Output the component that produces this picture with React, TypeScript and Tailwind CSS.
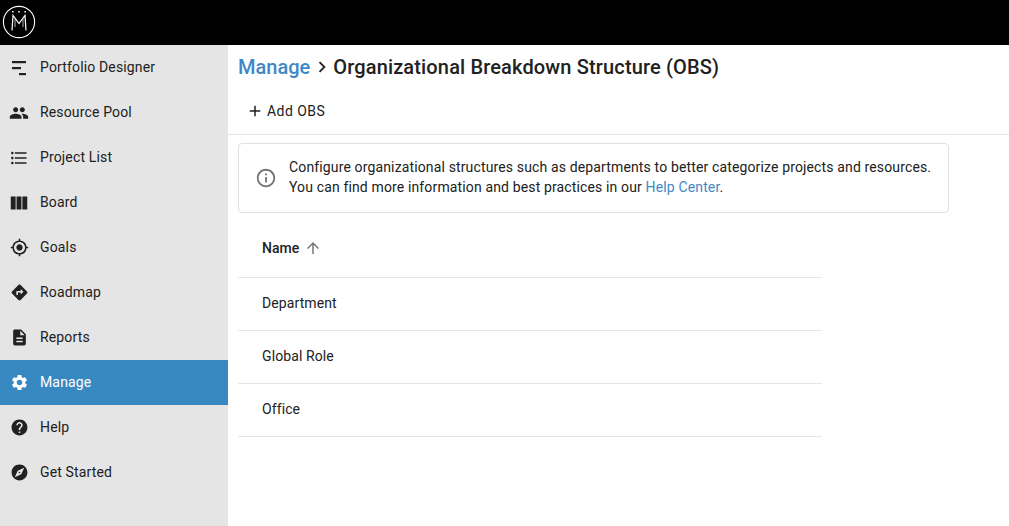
import React from 'react';
import {
  MdPeople,
  MdFormatListBulleted,
  MdViewColumn,
  MdGpsFixed,
  MdDirections,
  MdDescription,
  MdSettings,
  MdHelp,
  MdExplore,
  MdAdd,
  MdInfoOutline,
  MdArrowUpward,
  MdChevronRight,
} from 'react-icons/md';

const DesignerIcon = () => (
  <svg viewBox="0 0 24 24" className="w-[24px] h-[24px]" fill="currentColor">
    <rect x="5" y="5" width="14" height="2.2" />
    <rect x="5" y="11" width="9" height="2.2" />
    <rect x="12" y="17" width="7" height="2.2" />
  </svg>
);

const Logo = () => (
  <svg viewBox="0 0 34 34" className="w-[34px] h-[34px] text-white" fill="none" stroke="currentColor">
    <circle cx="17" cy="17" r="15.6" strokeWidth="1.1" />
    <path d="M10 25.5 L11 10.5 L17 18.5 L23 10.5 L24 25.5" strokeWidth="1.2" />
    <path d="M13 22 L13 14 M21 22 L21 14" strokeWidth="0.7" />
    <path d="M10.8 6 v1.6 M17 6 v1.6 M23.2 6 v1.6" strokeWidth="1.5" />
  </svg>
);

const navItems = [
  { label: 'Portfolio Designer', icon: <DesignerIcon /> },
  { label: 'Resource Pool', icon: <MdPeople size={20} /> },
  { label: 'Project List', icon: <MdFormatListBulleted size={20} /> },
  { label: 'Board', icon: <MdViewColumn size={22} /> },
  { label: 'Goals', icon: <MdGpsFixed size={19} /> },
  { label: 'Roadmap', icon: <MdDirections size={19} /> },
  { label: 'Reports', icon: <MdDescription size={19} /> },
  { label: 'Manage', icon: <MdSettings size={19} />, active: true },
  { label: 'Help', icon: <MdHelp size={19} /> },
  { label: 'Get Started', icon: <MdExplore size={19} /> },
];

const rows = ['Department', 'Global Role', 'Office'];

export default function App() {
  return (
    <div className="h-[526px] w-[1009px] flex flex-col overflow-hidden bg-white text-[14px] text-[#212121] font-['Roboto',sans-serif]">
      <header className="h-[45px] shrink-0 bg-black flex items-center pl-[2px] pb-[2px]">
        <Logo />
      </header>

      <div className="flex flex-1 min-h-0">
        <nav className="w-[228px] shrink-0 bg-[#e5e5e5]">
          {navItems.map((item) => (
            <div
              key={item.label}
              className={
                item.active
                  ? 'h-[45px] flex items-center bg-[#3888c2] text-white'
                  : 'h-[45px] flex items-center text-[#212121]'
              }
            >
              <span className="w-[40px] pl-[7px] flex justify-start">
                <span className="w-[24px] flex items-center justify-center">{item.icon}</span>
              </span>
              <span className="tracking-[0.15px]">{item.label}</span>
            </div>
          ))}
        </nav>

        <main className="flex-1 min-w-0">
          <div className="h-[45px] flex items-center pl-[10px] pb-[2px] text-[20px] font-medium leading-none">
            <span className="text-[#3f88c5]">Manage</span>
            <MdChevronRight size={22} className="ml-[1px] text-[#212121]" />
            <span className="tracking-[0.15px]">Organizational Breakdown Structure (OBS)</span>
          </div>

          <div className="h-[45px] flex items-center pl-[18px] pb-[2px] border-b border-[#e5e5e5]">
            <MdAdd size={18} className="mr-[3px]" />
            <span className="tracking-[0.45px]">Add OBS</span>
          </div>

          <div className="mt-[8px] ml-[10px] w-[711px] h-[70px] flex items-center border border-[#e0e0e0] rounded-[4px] pb-[2px]">
            <MdInfoOutline size={22} className="ml-[16px] mr-[12px] mt-[2px] text-[#757575] shrink-0" />
            <p className="leading-[20px] tracking-[0.14px]">
              Configure organizational structures such as departments to better categorize projects and resources.
              <br />
              You can find more information and best practices in our{' '}
              <span className="text-[#3f88c5]">Help Center</span>.
            </p>
          </div>

          <div className="ml-[10px] w-[584px]">
            <div className="h-[65px] flex items-center pl-[24px] pt-[6px] border-b border-[#e5e5e5] font-medium">
              <span>Name</span>
              <MdArrowUpward size={18} className="ml-[5px] text-[#757575]" />
            </div>
            {rows.map((row) => (
              <div key={row} className="h-[53px] flex items-center pl-[24px] pb-[2px] border-b border-[#e5e5e5] tracking-[0.1px]">
                {row}
              </div>
            ))}
          </div>
        </main>
      </div>
    </div>
  );
}
